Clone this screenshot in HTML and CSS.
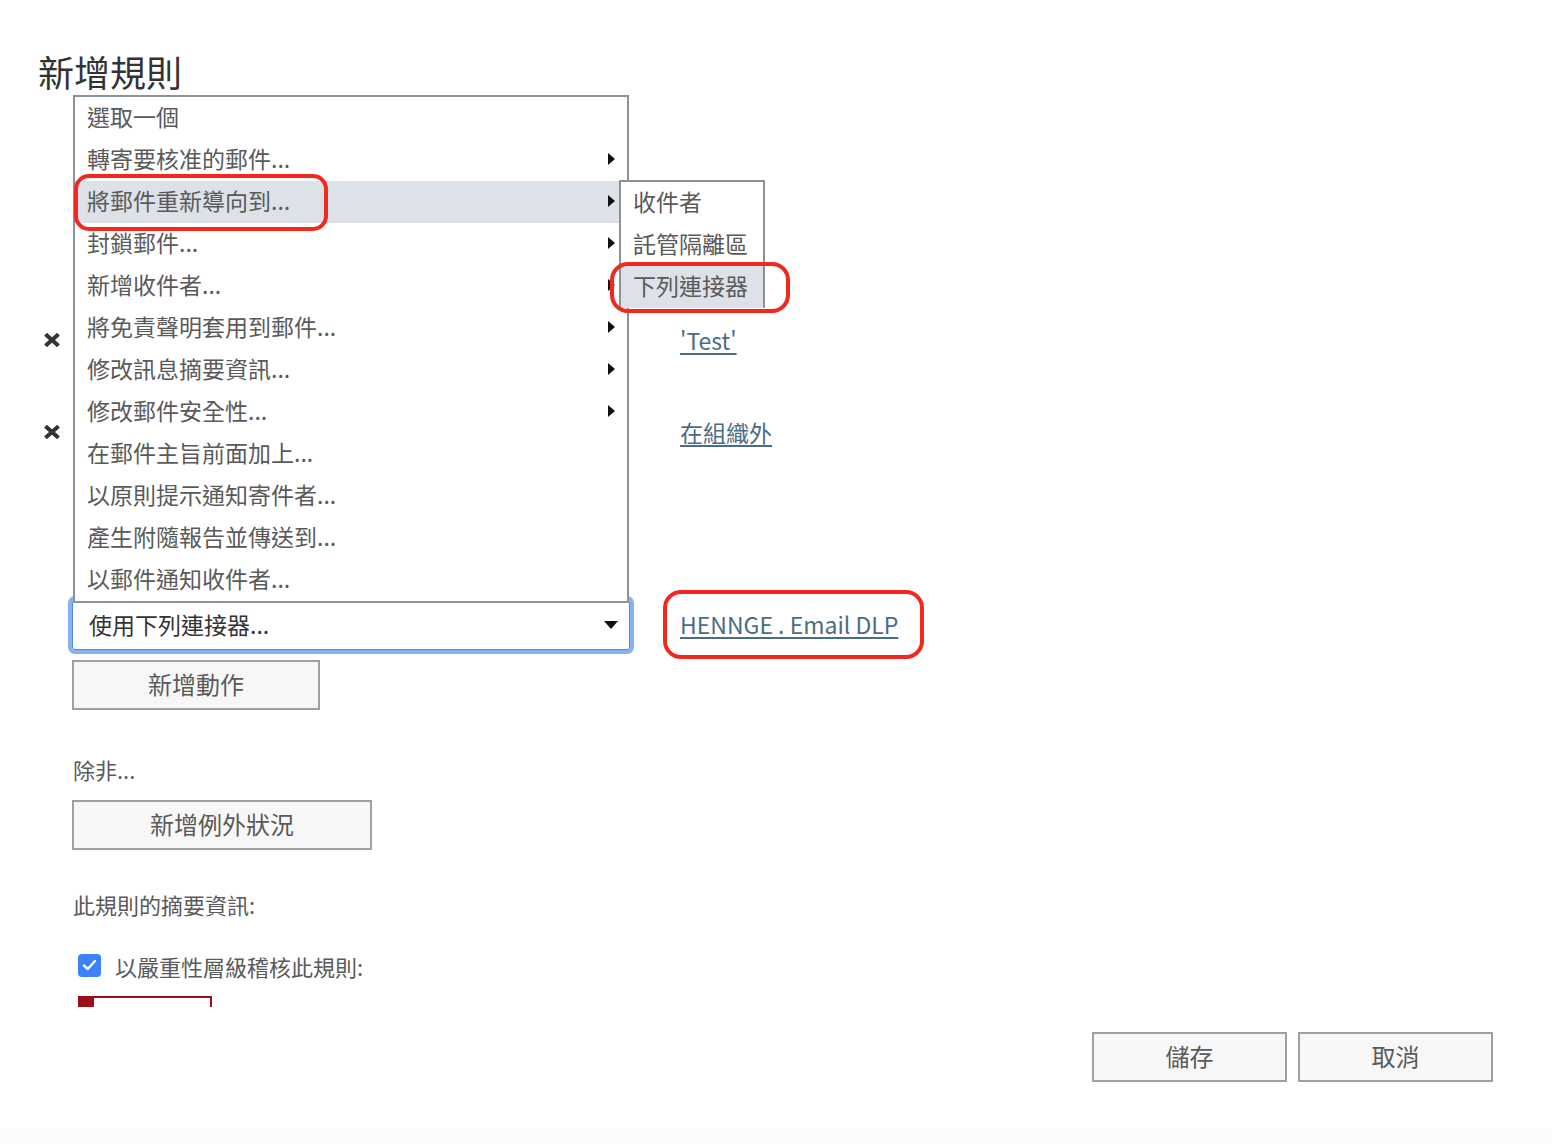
FILE: index.html
```html
<!DOCTYPE html>
<html lang="zh-Hant">
<head>
    <meta charset="UTF-8" />
    <meta name="viewport" content="width=device-width, initial-scale=1.0"/>
    <title>新增規則</title>
    <link rel="stylesheet" href="styles.css">
</head>
<body>
    <div class="content">
        <div class="page">
            <h1 class="page-title">新增規則</h1>

            <div class="actions">
                <div class="action-row row-1">
                    <span class="remove-icon">
                        <svg width="18" height="16" viewBox="0 0 18 16"><path d="M4 3.5 L14 12.5 M14 3.5 L4 12.5" stroke="#333" stroke-width="4" stroke-linecap="square"/></svg>
                    </span>
                    <div class="select-slot"></div>
                    <a class="action-link" href="#">'Test'</a>
                </div>
                <div class="action-row row-2">
                    <span class="remove-icon">
                        <svg width="18" height="16" viewBox="0 0 18 16"><path d="M4 3.5 L14 12.5 M14 3.5 L4 12.5" stroke="#333" stroke-width="4" stroke-linecap="square"/></svg>
                    </span>
                    <div class="select-slot"></div>
                    <a class="action-link" href="#">在組織外</a>
                </div>
                <div class="action-row row-3">
                    <span class="remove-icon empty"></span>
                    <div class="select-box focused">
                        <span class="select-text">使用下列連接器...</span>
                        <span class="caret-down"></span>
                    </div>
                    <a class="action-link" href="#">HENNGE . Email DLP</a>
                </div>
            </div>

            <button class="btn btn-add">新增動作</button>

            <p class="label unless">除非...</p>
            <button class="btn btn-except">新增例外狀況</button>

            <p class="label summary">此規則的摘要資訊:</p>

            <label class="audit-row">
                <span class="checkbox">
                    <svg width="15" height="12" viewBox="0 0 15 12"><path d="M2 6.5 L5.8 10 L13 2" fill="none" stroke="#fff" stroke-width="2.4" stroke-linecap="round" stroke-linejoin="round"/></svg>
                </span>
                <span class="audit-text">以嚴重性層級稽核此規則:</span>
            </label>
            <div class="severity-box">
                <span class="severity-swatch"></span>
            </div>

            <!-- open dropdown menu -->
            <ul class="menu">
                <li class="menu-item">選取一個</li>
                <li class="menu-item has-sub">轉寄要核准的郵件...</li>
                <li class="menu-item has-sub hover">將郵件重新導向到...</li>
                <li class="menu-item has-sub">封鎖郵件...</li>
                <li class="menu-item has-sub">新增收件者...</li>
                <li class="menu-item has-sub">將免責聲明套用到郵件...</li>
                <li class="menu-item has-sub">修改訊息摘要資訊...</li>
                <li class="menu-item has-sub">修改郵件安全性...</li>
                <li class="menu-item">在郵件主旨前面加上...</li>
                <li class="menu-item">以原則提示通知寄件者...</li>
                <li class="menu-item">產生附隨報告並傳送到...</li>
                <li class="menu-item">以郵件通知收件者...</li>
            </ul>

            <ul class="submenu">
                <li class="menu-item">收件者</li>
                <li class="menu-item">託管隔離區</li>
                <li class="menu-item hover">下列連接器</li>
            </ul>

            <!-- annotation rings -->
            <span class="ring ring-redirect"></span>
            <span class="ring ring-connector"></span>
            <span class="ring ring-link"></span>
        </div>
    </div>

    <div class="footer">
        <button class="btn btn-footer">儲存</button>
        <button class="btn btn-footer">取消</button>
    </div>
    <div class="statusbar"></div>
</body>
</html>
```

FILE: styles.css
```css
* {
    margin: 0;
    padding: 0;
    box-sizing: border-box;
}

body {
    font-family: "Noto Sans CJK TC", "Noto Sans", sans-serif;
    background: #fff;
    color: #5a5a5a;
}

.content {
    height: 1007px;
    overflow: hidden;
}

.page {
    position: relative;
    padding: 50px 38px 0;
}

.page-title {
    font-size: 36px;
    font-weight: 400;
    line-height: 42px;
    color: #333;
}

.actions {
    margin-top: 224px;
    display: flex;
    flex-direction: column;
}

.action-row {
    display: flex;
    align-items: center;
    height: 50px;
}

.row-2 {
    margin-top: 42px;
}

.row-3 {
    margin-top: 142px;
}

.remove-icon {
    width: 34px;
    display: flex;
    justify-content: flex-start;
    padding-left: 5px;
    margin-top: -2px;
}

.select-slot {
    width: 558px;
}

.select-box {
    width: 558px;
    height: 50px;
    border: 1px solid #4d8ad6;
    border-radius: 3px;
    display: flex;
    align-items: center;
    justify-content: space-between;
    padding: 0 11px 3px 16px;
}

.select-box.focused {
    box-shadow: 0 0 0 4px #86b2f4;
}

.select-text {
    font-size: 23px;
    color: #333;
}

.caret-down {
    width: 0;
    height: 0;
    margin-top: 3px;
    border-left: 7px solid transparent;
    border-right: 7px solid transparent;
    border-top: 8px solid #111;
}

.action-link {
    margin-left: 50px;
    margin-top: -3px;
    font-size: 23px;
    color: #4a6c84;
    text-decoration: underline;
    text-underline-offset: 3px;
}

.btn {
    display: block;
    background: #f7f7f7;
    border: 2px solid #99a3a6;
    color: #5a5a5a;
    font-family: "Noto Sans CJK TC", "Noto Sans", sans-serif;
    font-size: 24px;
    height: 50px;
    padding-bottom: 4px;
    cursor: pointer;
}

.btn-add {
    width: 248px;
    margin: 10px 0 0 34px;
}

.btn-except {
    width: 300px;
    margin: 16px 0 0 34px;
}

.label {
    font-size: 22px;
    line-height: 30px;
    margin-left: 35px;
    color: #5a5a5a;
}

.unless {
    margin-top: 44px;
}

.summary {
    margin-top: 39px;
}

.audit-row {
    display: flex;
    align-items: center;
    margin: 32px 0 0 40px;
    height: 30px;
}

.checkbox {
    width: 23px;
    height: 23px;
    border-radius: 4px;
    background: #3b82f6;
    display: flex;
    align-items: center;
    justify-content: center;
    margin-right: 14px;
    margin-top: -2px;
}

.audit-text {
    font-size: 22px;
    color: #5a5a5a;
}

.severity-box {
    width: 134px;
    height: 50px;
    margin: 15px 0 0 40px;
    border: 2px solid #9c0f17;
    display: flex;
}

.severity-swatch {
    width: 14px;
    height: 100%;
    background: #9c0f17;
}

/* dropdown menu */
.menu,
.submenu {
    position: absolute;
    list-style: none;
    background: #fff;
    border: 2px solid #8c9299;
}

.menu {
    top: 95px;
    left: 73px;
    width: 556px;
}

.submenu {
    top: 180px;
    left: 619px;
    width: 146px;
    border-bottom: none;
}

.menu-item {
    position: relative;
    height: 42px;
    line-height: 38px;
    padding-left: 12px;
    font-size: 23px;
    color: #5a5a5a;
    white-space: nowrap;
}

.menu-item.hover {
    background: #dde1e8;
}

.has-sub::after {
    content: "";
    position: absolute;
    right: 12px;
    top: 14px;
    border-top: 6px solid transparent;
    border-bottom: 6px solid transparent;
    border-left: 7px solid #111;
}

/* red annotation rings */
.ring {
    position: absolute;
    border: 4px solid #f0281e;
    border-radius: 15px;
    pointer-events: none;
}

.ring-redirect {
    left: 74px;
    top: 174px;
    width: 254px;
    height: 57px;
}

.ring-connector {
    left: 610px;
    top: 262px;
    width: 180px;
    height: 51px;
    border-radius: 18px;
}

.ring-link {
    left: 663px;
    top: 590px;
    width: 261px;
    height: 69px;
    border-radius: 18px;
}

.footer {
    display: flex;
    justify-content: flex-end;
    gap: 11px;
    padding: 25px 59px 0 0;
    height: 122px;
}

.btn-footer {
    width: 195px;
}

.statusbar {
    height: 15px;
    background: #fbfbfb;
}
```
